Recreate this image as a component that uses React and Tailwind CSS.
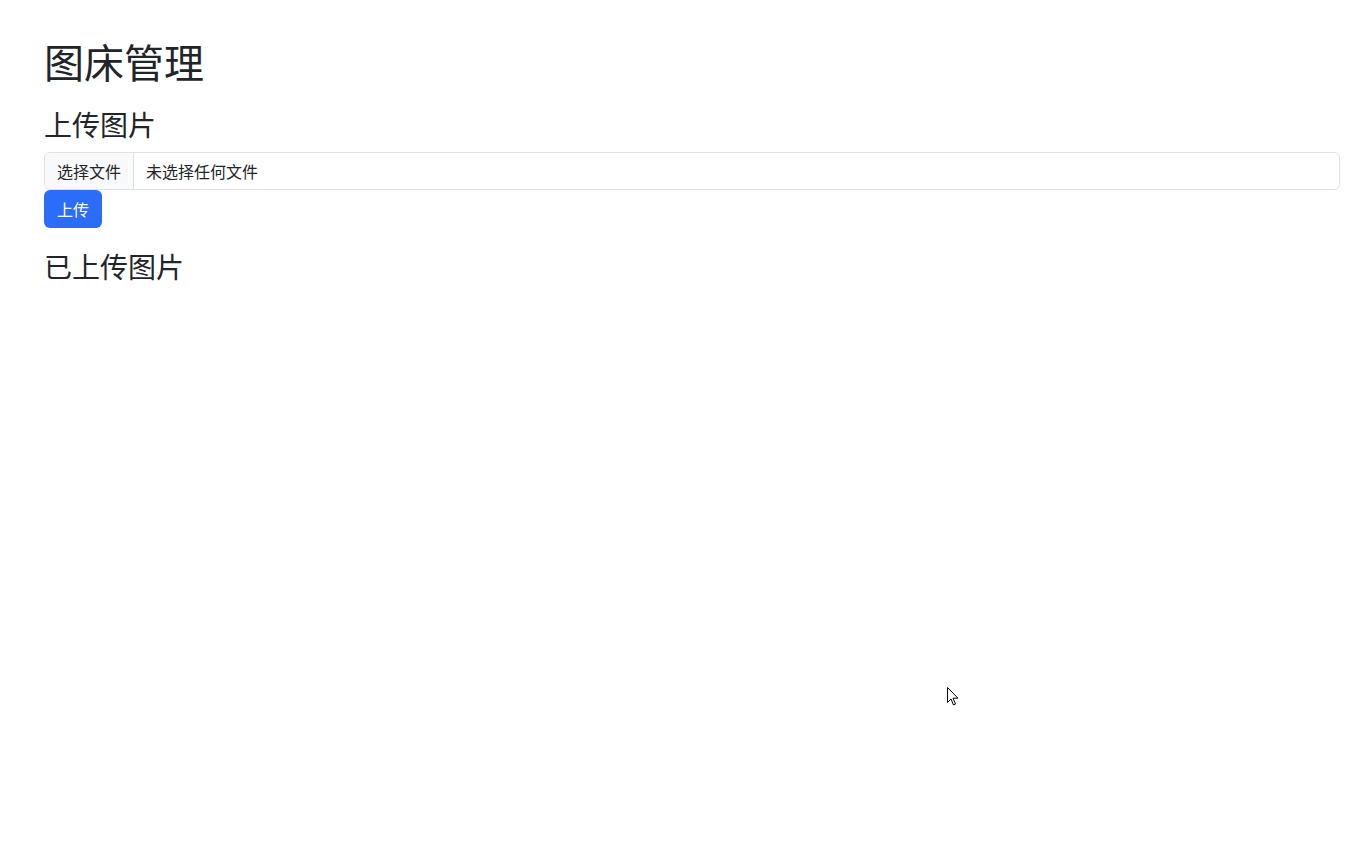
export default function App() {
  const font = { fontFamily: '"Noto Sans CJK SC", "Noto Sans", sans-serif' };
  return (
    <div className="relative min-h-[867px] bg-white text-[#212529] pl-[44px] pr-[24px] pt-[37px]" style={font}>
      <h1 className="text-[40px] leading-[48px] font-normal mb-[22px]">图床管理</h1>
      <h3 className="text-[28px] leading-[34px] font-normal mb-[11px]">上传图片</h3>
      <div className="flex h-[38px] w-full rounded-[6px] border border-[#dee2e6] overflow-hidden text-[16px]">
        <div className="flex items-center px-3 bg-[#f8f9fa] border-r border-[#dee2e6] w-[89px] pb-px">选择文件</div>
        <div className="flex items-center pl-3 pb-px">未选择任何文件</div>
      </div>
      <button className="h-[38px] w-[58px] rounded-[6px] bg-[#2b6cf8] text-white text-[16px] flex items-center justify-center pb-px">上传</button>
      <h3 className="text-[28px] leading-[34px] font-normal mt-[21px]">已上传图片</h3>
      <svg className="absolute left-[947px] top-[687px]" width="13" height="20" viewBox="0 0 13 20">
        <path d="M0.5 0.5 L0.5 15.5 L4 12 L6.5 18 L8.5 17 L6 11.2 L11 11.2 Z" fill="white" stroke="black" strokeWidth="1" strokeLinejoin="miter" />
      </svg>
    </div>
  );
}
